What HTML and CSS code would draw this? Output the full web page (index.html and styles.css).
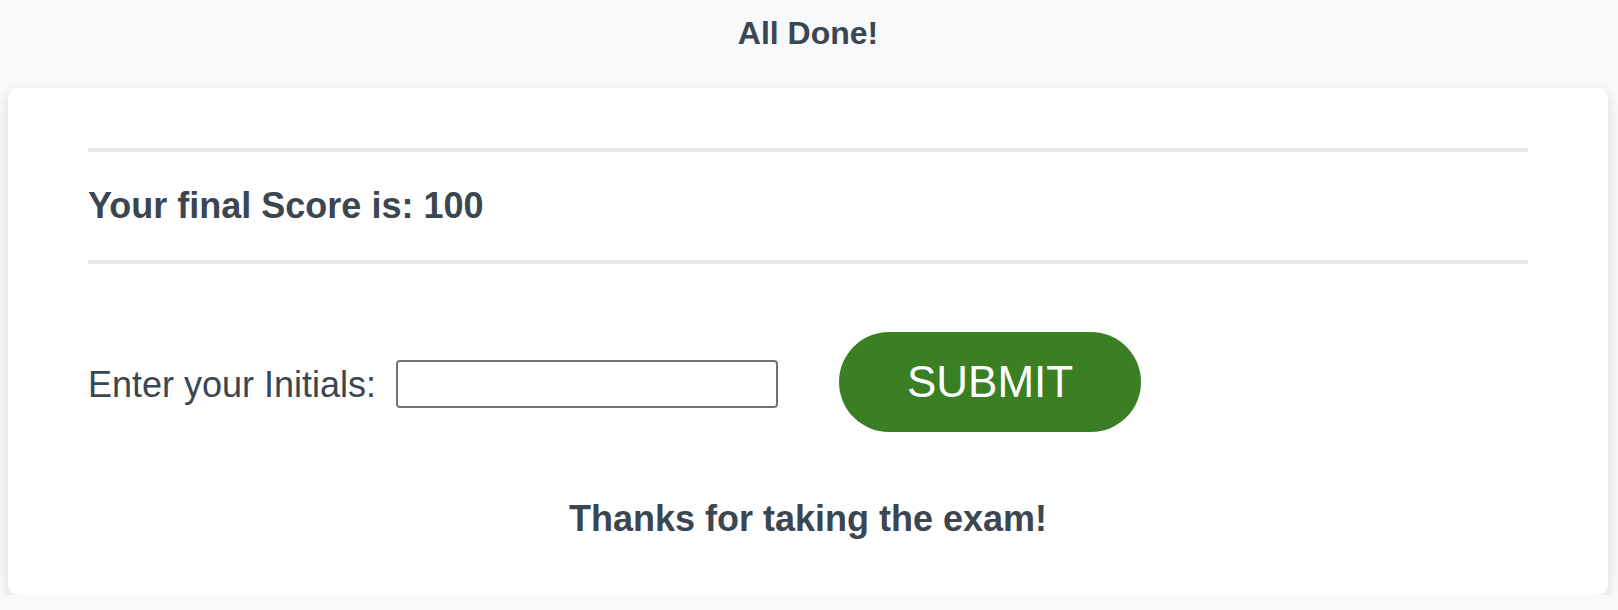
FILE: index.html
```html
<!DOCTYPE html>
<html lang="en">
<head>
<meta charset="utf-8">
<title>All Done!</title>
<link rel="stylesheet" href="styles.css">
</head>
<body>
<header class="page-header">
  <h1 class="title">All Done!</h1>
</header>
<main class="card">
  <hr class="rule">
  <h2 class="score">Your final Score is: 100</h2>
  <hr class="rule">
  <form class="initials-form" onsubmit="return false;">
    <label class="label" for="initials">Enter your Initials:</label>
    <input class="initials-input" id="initials" type="text">
    <button class="submit-btn" type="submit">SUBMIT</button>
  </form>
  <p class="thanks">Thanks for taking the exam!</p>
</main>
</body>
</html>
```
FILE: styles.css
```css
* { box-sizing: border-box; }
html, body { margin: 0; padding: 0; }
body {
  background: #f8f9fb;
  font-family: "Liberation Sans", Arial, sans-serif;
  color: #3c4650;
  padding: 0 10px 0 8px;
}
.page-header {
  padding: 15px 0 36px;
}
.title {
  margin: 0;
  font-size: 32px;
  line-height: 37px;
  font-weight: 700;
  text-align: center;
}
.card {
  background: #ffffff;
  border-radius: 10px;
  box-shadow: 0 4px 14px rgba(0, 0, 0, 0.12);
  padding: 60px 80px 56px;
}
.rule {
  margin: 0;
  border: 0;
  height: 4px;
  background: #e7e8e9;
}
.score {
  margin: 33px 0 34px;
  font-size: 36px;
  line-height: 41px;
  font-weight: 700;
}
.initials-form {
  display: flex;
  align-items: flex-start;
  margin-top: 68px;
}
.label {
  font-size: 36px;
  line-height: 41px;
  margin-top: 32px;
}
.initials-input {
  width: 382px;
  height: 48px;
  margin: 28px 0 0 20px;
  border: 2px solid #737373;
  border-radius: 4px;
  background: #fff;
  font-size: 24px;
  font-family: "Liberation Sans", Arial, sans-serif;
  padding: 0 8px;
}
.submit-btn {
  width: 302px;
  height: 100px;
  margin-left: 61px;
  border: 0;
  border-radius: 50px;
  background: #3a7f24;
  color: #ffffff;
  font-family: "Liberation Sans", Arial, sans-serif;
  font-size: 44px;
  line-height: 1;
  padding: 0;
  cursor: pointer;
}
.thanks {
  margin: 66px 0 0;
  text-align: center;
  font-size: 36px;
  line-height: 41px;
  font-weight: 700;
}
```
